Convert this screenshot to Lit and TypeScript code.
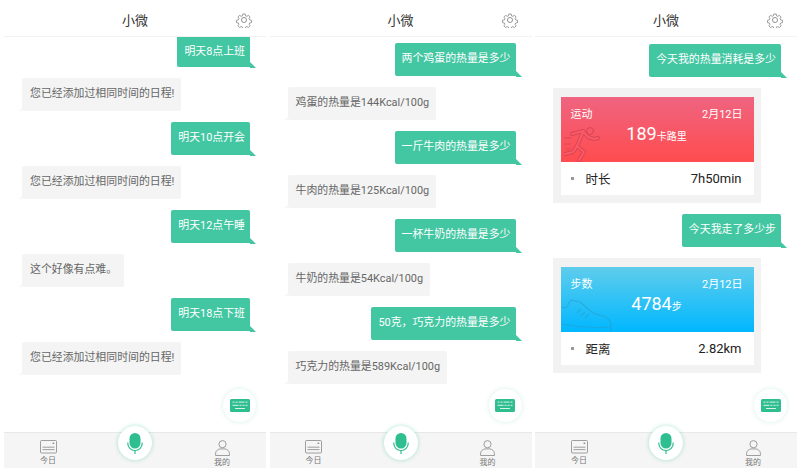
import { LitElement, html, css, svg } from "lit";
import { customElement } from "lit/decorators.js";

type Msg = { me?: boolean; t?: string; card?: "run" | "step" };
const phones: { top: number; msgs: Msg[] }[] = [
  { top: 0, msgs: [
    { me: true, t: "明天8点上班" }, { t: "您已经添加过相同时间的日程!" },
    { me: true, t: "明天10点开会" }, { t: "您已经添加过相同时间的日程!" },
    { me: true, t: "明天12点午睡" }, { t: "这个好像有点难。" },
    { me: true, t: "明天18点下班" }, { t: "您已经添加过相同时间的日程!" },
  ]},
  { top: 7, msgs: [
    { me: true, t: "两个鸡蛋的热量是多少" }, { t: "鸡蛋的热量是144Kcal/100g" },
    { me: true, t: "一斤牛肉的热量是多少" }, { t: "牛肉的热量是125Kcal/100g" },
    { me: true, t: "一杯牛奶的热量是多少" }, { t: "牛奶的热量是54Kcal/100g" },
    { me: true, t: "50克\uFF0C巧克力的热量是多少" }, { t: "巧克力的热量是589Kcal/100g" },
  ]},
  { top: 8, msgs: [
    { me: true, t: "今天我的热量消耗是多少" }, { card: "run" },
    { me: true, t: "今天我走了多少步" }, { card: "step" },
  ]},
];

const gear = svg`<svg width="16" height="16" viewBox="0 0 24 24" fill="none" stroke="#777" stroke-width="1.200" stroke-linejoin="round"><circle cx="12" cy="12" r="3.800"/><path d="M10 2h4l.6 3 2.200.9 2.600-1.700 2.800 2.800-1.700 2.600.9 2.200 3 .6v4l-3 .6-.9 2.200 1.700 2.600-2.800 2.800-2.600-1.700-2.200.9-.6 3h-4l-.6-3-2.200-.9-2.600 1.700-2.800-2.800 1.700-2.600-.9-2.200-3-.6v-4l3-.6.9-2.200L1.800 7l2.800-2.800 2.600 1.700 2.200-.9z" transform="translate(1.200 1.200) scale(.9)"/></svg>`;
const kb = svg`<svg width="20" height="13" viewBox="0 0 20 13"><rect width="20" height="13" rx="1.500" fill="#2fbe8f"/><g fill="#d6f3e8"><rect x="2.500" y="2.600" width="2" height="1"/><rect x="5.500" y="2.600" width="2" height="1"/><rect x="8.500" y="2.600" width="6" height="1"/><rect x="15.500" y="2.600" width="2" height="1"/><rect x="2.500" y="5.800" width="6" height="1"/><rect x="9.500" y="5.800" width="2" height="1"/><rect x="12.500" y="5.800" width="2" height="1"/><rect x="15.500" y="5.800" width="2" height="1"/><rect x="5" y="9" width="10" height="1"/></g></svg>`;
const mic = svg`<svg width="16" height="21" viewBox="0 0 16 21"><rect x="2.500" y="0" width="11" height="15.500" rx="5.500" fill="#2fbe8f"/><path d="M.7 9.500c0 4.800 3.200 8 7.300 8s7.300-3.200 7.300-8" fill="none" stroke="#2fbe8f" stroke-width="1.200"/><rect x="7.400" y="17" width="1.200" height="4" fill="#2fbe8f"/></svg>`;
const today = svg`<svg width="17" height="14" viewBox="0 0 17 14" fill="none" stroke="#888" stroke-width=".8"><rect x=".5" y=".5" width="16" height="12.500" rx="1"/><path d="M2.500 7.200h12M2.500 9.600h12"/><rect x="12.600" y="2.600" width="1.600" height="1.400" fill="#888" stroke="none"/></svg>`;
const user = svg`<svg width="15" height="16" viewBox="0 0 15 16" fill="none" stroke="#888" stroke-width=".8"><circle cx="7.500" cy="4.200" r="3.600"/><path d="M.6 15.500v-2.200c0-2.400 2.400-4 4.400-4.400h5c2 .4 4.400 2 4.400 4.400v2.200z"/></svg>`;
const runPaths = "M8 9 19 6 24 12 30 14 34 13M19 7 13 21 20 27 15 35M13 21 9 27 1 29";
const runner = svg`<svg class="art art-run" width="36" height="37" viewBox="0 0 36 37" fill="none" stroke-linejoin="round" stroke-linecap="round">
  <path d="${runPaths}" stroke="#c43a4c" stroke-opacity=".6" stroke-width="4"/>
  <path d="${runPaths}" stroke="#f85a66" stroke-width="2.200"/>
  <circle cx="26" cy="6" r="3.500" stroke="#c43a4c" stroke-opacity=".6" stroke-width="1"/>
  <path d="M1 13h6M0 19h6M2 24h4" stroke="#c43a4c" stroke-opacity=".5" stroke-width="1"/>
</svg>`;
const shoe = svg`<svg class="art art-step" width="52" height="33" viewBox="0 0 52 33" fill="none" stroke="#2a9ecf" stroke-opacity=".6" stroke-width="1.100" stroke-linejoin="round">
  <path d="M0 8 5 9 10 1 19 3 32 14 45 18Q50 21 50 28L50 33"/>
  <path d="M0 25Q25 30 50 28M20 10 16 14M24 13 20 17M28 15 24 19"/>
</svg>`;

@customElement("app-root")
export class AppRoot extends LitElement {
  static styles = css`
    :host { display: block; width: 800px; height: 472px; background: #fff; overflow: hidden; font-family: "Roboto", "Noto Sans CJK SC", sans-serif; }
    .wrap { display: grid; grid-template-columns: repeat(3, 262px); column-gap: 3.5px; padding-left: 4px; }
    .phone { position: relative; height: 468px; display: flex; flex-direction: column; }
    .head { flex: none; height: 37px; box-sizing: border-box; border-bottom: 1px solid #f2f2f2; padding-top: 3px; display: flex; align-items: center; justify-content: center; position: relative; font-size: 13px; color: #333; }
    .gear { position: absolute; right: 14px; top: 12px; line-height: 0; }
    .chat { flex: 1; min-height: 0; overflow: hidden; display: flex; flex-direction: column; gap: 11px; padding-right: 16px; padding-left: 18px; }
    .pad0 { padding-top: 0; }
    .pad7 { padding-top: 6px; }
    .pad8 { padding-top: 7px; }
    .b { align-self: flex-start; position: relative; font-size: 10.9px; line-height: 32px; height: 33px; padding: 0 7px 0 8px; color: #666; background: #f4f4f4; white-space: nowrap; border-radius: 2px; }
    .b::before { content: ""; position: absolute; right: 100%; bottom: 0; border-right: 4px solid #f7f7f7; border-top: 3px solid transparent; }
    .me { align-self: flex-end; padding: 0 5px 0 7px; background: #43c6a2; color: #fff; border-radius: 2px 2px 0 2px; }
    .me::before { display: none; }
    .me::after { content: ""; position: absolute; left: 100%; bottom: -1px; border-left: 6px solid #43c6a2; border-top: 6px solid transparent; }
    .cut { height: 30px; line-height: 29px; border-top-left-radius: 0; border-top-right-radius: 0; }
    .card { width: 193px; align-self: flex-start; background: #f2f2f2; padding: 9px 7px 8px 8px; margin-left: -.5px; }
    .top { height: 65px; position: relative; color: #fff; font-size: 11px; overflow: hidden; padding: 11px 11px 0 10px; box-sizing: border-box; }
    .run { background: linear-gradient(#ef6480, #ff4c4f); }
    .step { background: linear-gradient(#5fcdec, #00b7ff); }
    .row1 { display: flex; justify-content: space-between; line-height: 14px; }
    .big { text-align: center; font-size: 18px; font-weight: 400; line-height: 22px; margin-top: 1px; }
    .big small { font-size: 10px; font-weight: 400; }
    .art { position: absolute; bottom: 0; }
    .art-run { left: 3px; }
    .art-step { left: 0; }
    .bot { height: 33px; background: #fff; display: flex; align-items: center; font-size: 13px; color: #222; padding: 0 12px 0 10px; }
    .dot { width: 3px; height: 3px; background: #999; margin-right: 12px; }
    .bot b { font-weight: 400; flex: 1; font-size: 12.5px; }
    .fab { position: absolute; right: 10px; top: 389px; width: 33px; height: 33px; border-radius: 50%; background: #fff; box-shadow: 0 0 5px rgba(67,198,162,.22); display: flex; align-items: center; justify-content: center; }
    .nav { flex: none; height: 36px; background: #f5f5f5; border-top: 1px solid #e8e8e8; box-sizing: border-box; display: grid; grid-template-columns: 88px 1fr 88px; position: relative; }
    .tab { display: flex; flex-direction: column; align-items: center; font-size: 8px; color: #777; padding-top: 7px; line-height: 10px; gap: 2px; }
    .tab svg { display: block; }
    .micb { position: absolute; left: 114px; top: -7px; width: 34px; height: 34px; border-radius: 50%; background: #fff; box-shadow: 0 0 4px rgba(67,198,162,.45); display: flex; align-items: center; justify-content: center; }
  `;
  card(kind: "run" | "step") {
    const run = kind === "run";
    return html`<div class="card">
      <div class="top ${kind}">
        ${run ? runner : shoe}
        <div class="row1"><span>${run ? "运动" : "步数"}</span><span>2月12日</span></div>
        <div class="big">${run ? "189" : "4784"}<small>${run ? "卡路里" : "步"}</small></div>
      </div>
      <div class="bot"><i class="dot"></i><b>${run ? "时长" : "距离"}</b><span>${run ? "7h50min" : "2.82km"}</span></div>
    </div>`;
  }
  render() {
    return html`<div class="wrap">${phones.map((p, pi) => html`<section class="phone">
      <div class="head">小微<span class="gear">${gear}</span></div>
      <div class="chat pad${p.top}">
        ${p.msgs.map((m, i) => m.card ? this.card(m.card)
          : html`<div class="b ${m.me ? "me" : ""} ${pi === 0 && i === 0 ? "cut" : ""}">${m.t}</div>`)}
      </div>
      <div class="fab">${kb}</div>
      <div class="nav">
        <div class="tab">${today}<span>今日</span></div><div></div>
        <div class="tab">${user}<span>我的</span></div>
        <div class="micb">${mic}</div>
      </div>
    </section>`)}</div>`;
  }
}
